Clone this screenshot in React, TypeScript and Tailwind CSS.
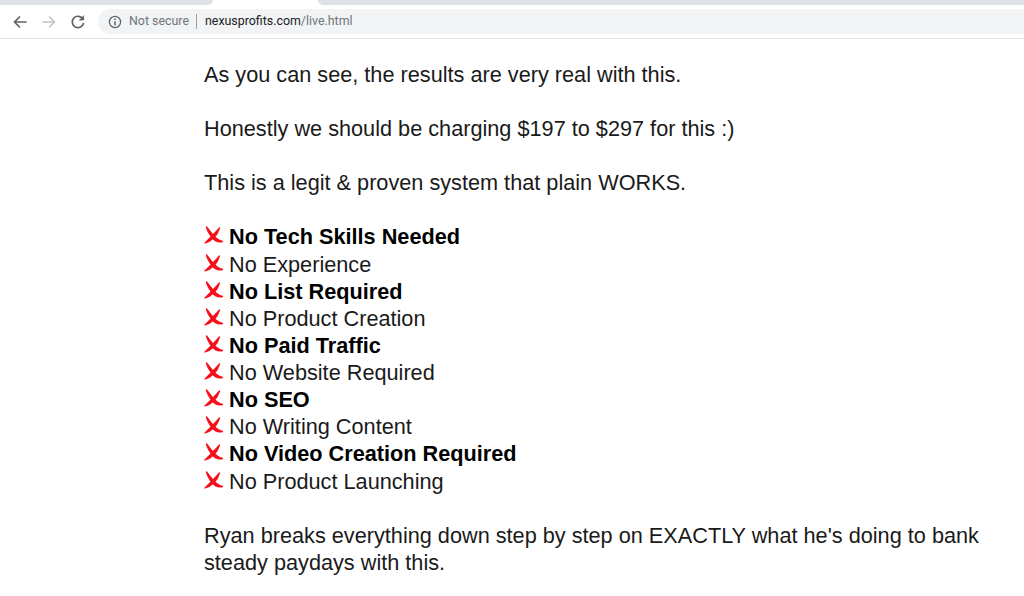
import React from "react";

const Cross = () => (
  <svg width="20" height="19" viewBox="0 0 20 19" className="inline-block align-baseline mr-[5px] -mb-[1px]">
    <path d="M2.5 1 C4 2.5 6.5 6 8.5 8.5 C10.5 11 13.5 14.5 18.5 15.5 C14.5 16.5 10.5 14.5 8 11.5 C6 9 3 4 2.5 1 Z" fill="#f5101c" stroke="#f5101c" strokeWidth="1.3" strokeLinejoin="round" />
    <path d="M15.5 2 C13 5 10.5 7.5 8 10 C6 12 3.5 14.5 1 17 C4.5 16 7.5 14 10 11.5 C12.5 9 14.5 5.5 15.5 2 Z" fill="#f5101c" stroke="#f5101c" strokeWidth="1.3" strokeLinejoin="round" />
  </svg>
);

const items: [string, boolean][] = [
  ["No Tech Skills Needed", true],
  ["No Experience", false],
  ["No List Required", true],
  ["No Product Creation", false],
  ["No Paid Traffic", true],
  ["No Website Required", false],
  ["No SEO", true],
  ["No Writing Content", false],
  ["No Video Creation Required", true],
  ["No Product Launching", false],
];

export default function App() {
  return (
    <div className="w-[1024px] h-[596px] overflow-hidden bg-white font-['Liberation_Sans',Arial,sans-serif]">
      <div className="h-[5px] flex bg-white">
        <div className="w-[213px] bg-[#dee1e6] rounded-br-[6px]" />
        <div className="w-[105px]" />
        <div className="flex-1 bg-[#dee1e6] rounded-bl-[6px]" />
      </div>
      <div className="h-[34px] flex items-start pt-[4px] border-b border-[#dfe1e5]">
        <div className="w-[98px] h-[25px] flex items-center shrink-0">
          <svg width="16" height="16" viewBox="0 0 16 16" className="ml-[12px]" fill="none" stroke="#5f6368" strokeWidth="1.7">
            <path d="M14.5 8H2.5M8 2.5L2.5 8L8 13.5" />
          </svg>
          <svg width="16" height="16" viewBox="0 0 16 16" className="ml-[13px]" fill="none" stroke="#bdc1c6" strokeWidth="1.5">
            <path d="M1.5 8H13.5M8 2.5L13.5 8L8 13.5" />
          </svg>
          <svg width="16" height="16" viewBox="0 0 16 16" className="ml-[13px]" fill="none" stroke="#5f6368" strokeWidth="1.7">
            <path d="M13 5.2A5.7 5.7 0 1 0 13.6 9" />
            <path d="M13.6 1.5V6H9.2" fill="#5f6368" strokeWidth="0.8" />
          </svg>
        </div>
        <div className="flex-1 h-[25px] bg-[#f1f3f4] rounded-l-full flex items-center text-[12.4px] font-['Roboto',sans-serif] leading-none">
          <svg width="14" height="14" viewBox="0 0 14 14" className="ml-[10px]" fill="none" stroke="#5f6368" strokeWidth="1.3">
            <circle cx="7" cy="7" r="5.6" />
            <path d="M7 6.2V10.2M7 3.6V5" strokeWidth="1.5" />
          </svg>
          <span className="ml-[7px] text-[#70757a]">Not secure</span>
          <span className="ml-[7px] w-px h-[15px] bg-[#9aa0a6]" />
          <span className="ml-[8px] text-[#202124]">nexusprofits.com<span className="text-[#70757a]">/live.html</span></span>
        </div>
      </div>
      <main className="pl-[204px] pt-[22px] w-[1000px] text-[21.7px] leading-[27.13px] text-[#1a1a1a]">
        <p className="mb-[27px]">As you can see, the results are very real with this.</p>
        <p className="mb-[27px]">Honestly we should be charging $197 to $297 for this :)</p>
        <p className="mb-[27px]">This is a legit &amp; proven system that plain WORKS.</p>
        <ul className="mb-[27px]">
          {items.map(([t, b]) => (
            <li key={t} className={b ? "font-bold text-black" : ""}>
              <Cross />
              {t}
            </li>
          ))}
        </ul>
        <p>Ryan breaks everything down step by step on EXACTLY what he's doing to bank steady paydays with this.</p>
      </main>
    </div>
  );
}
